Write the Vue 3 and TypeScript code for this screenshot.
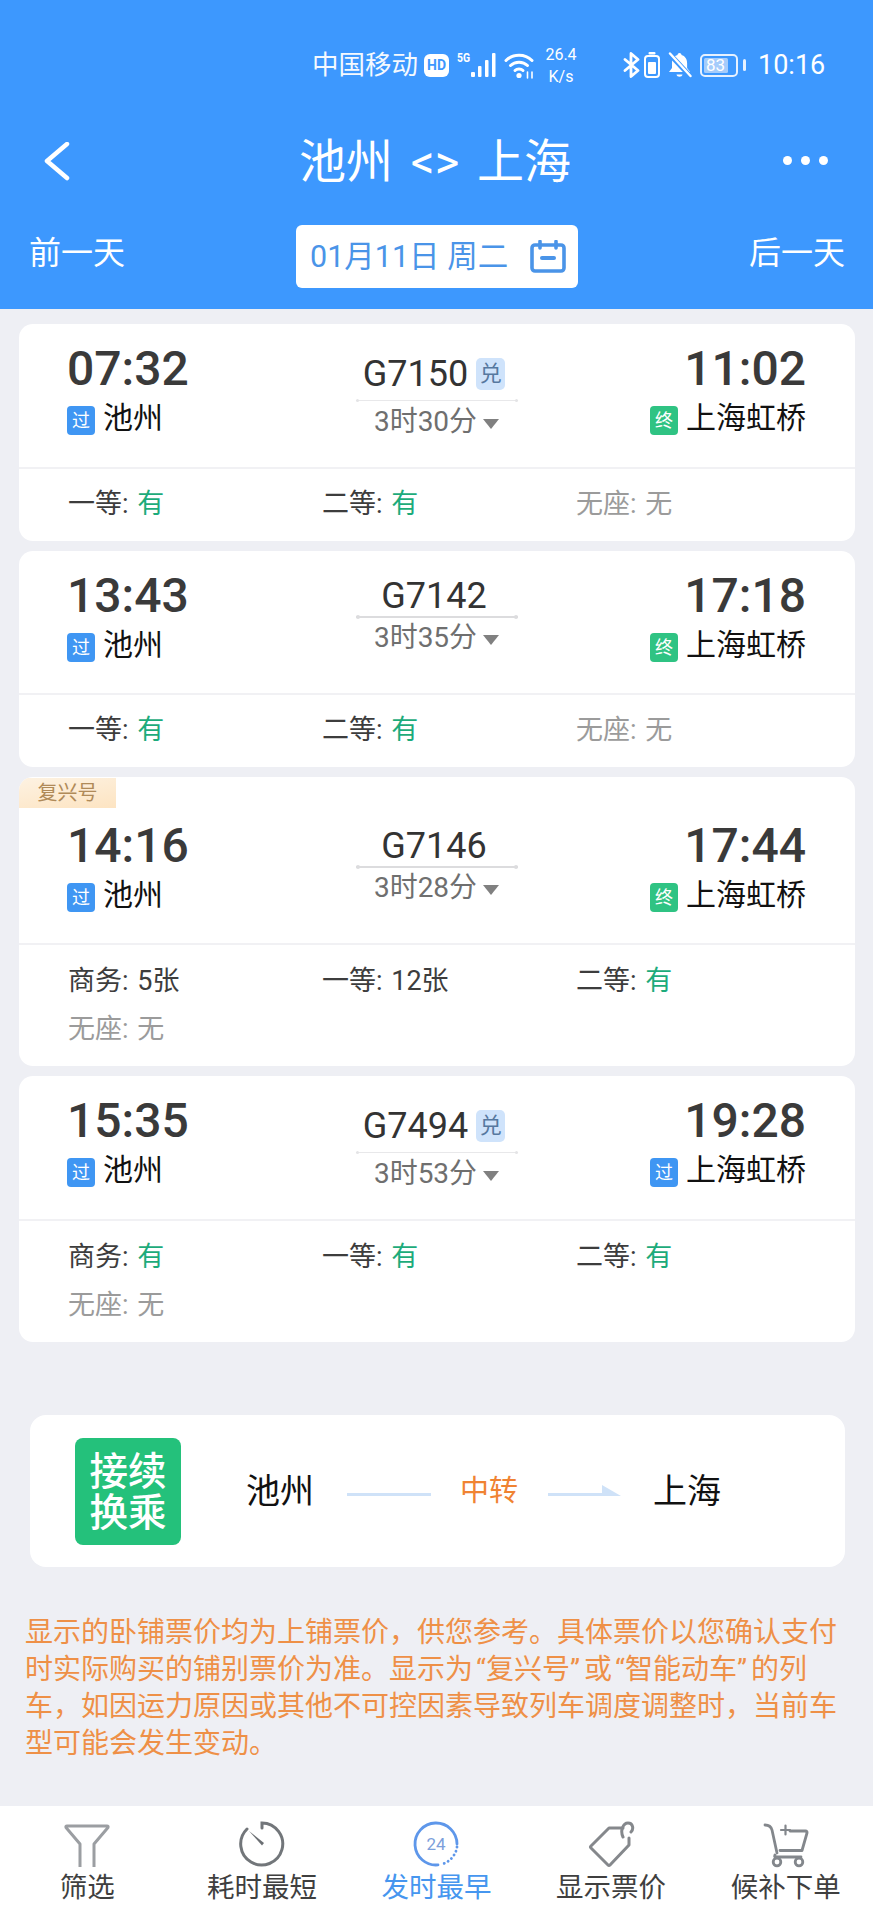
<script setup lang="ts">
interface Seat { label: string; value: string; state: 'yes' | 'count' | 'none' }
interface Train {
  dep: string; arr: string; no: string; dur: string; bonus?: boolean; tag?: string;
  endMark: string; endKind: 'end' | 'pass'; seats: Seat[];
}
const S = (label: string, value: string, state: Seat['state']): Seat => ({ label, value, state })
const trains: Train[] = [
  { dep: '07:32', arr: '11:02', no: 'G7150', dur: '3时30分', bonus: true, endMark: '终', endKind: 'end',
    seats: [S('一等', '有', 'yes'), S('二等', '有', 'yes'), S('无座', '无', 'none')] },
  { dep: '13:43', arr: '17:18', no: 'G7142', dur: '3时35分', endMark: '终', endKind: 'end',
    seats: [S('一等', '有', 'yes'), S('二等', '有', 'yes'), S('无座', '无', 'none')] },
  { dep: '14:16', arr: '17:44', no: 'G7146', dur: '3时28分', tag: '复兴号', endMark: '终', endKind: 'end',
    seats: [S('商务', '5张', 'count'), S('一等', '12张', 'count'), S('二等', '有', 'yes'), S('无座', '无', 'none')] },
  { dep: '15:35', arr: '19:28', no: 'G7494', dur: '3时53分', bonus: true, endMark: '过', endKind: 'pass',
    seats: [S('商务', '有', 'yes'), S('一等', '有', 'yes'), S('二等', '有', 'yes'), S('无座', '无', 'none')] },
]
</script>

<template>
  <div class="page">
    <header class="head">
      <div class="status">
        <span class="carrier">中国移动</span>
        <span class="hd">HD</span>
        <span class="fiveg">5G</span>
        <svg class="signal" width="26" height="26" viewBox="0 0 26 26">
          <rect x="0" y="20" width="4" height="5" rx="1" fill="#fff" />
          <rect x="7" y="14" width="3.5" height="11" rx="1" fill="#fff" />
          <rect x="14" y="8" width="3.5" height="17" rx="1" fill="#fff" />
          <rect x="21" y="1" width="3.5" height="24" rx="1" fill="#fff" />
        </svg>
        <svg class="wifi" width="31" height="27" viewBox="0 0 31 27" fill="none" stroke="#fff" stroke-width="3" stroke-linecap="round">
          <path d="M2 8.5C9 1.5 21 1.5 28 8.5" />
          <path d="M6.5 13.5C11 9 19 9 23.5 13.5" />
          <path d="M11 18.5C13 16.5 17 16.5 19 18.5" />
          <circle cx="15" cy="23.5" r="2.6" fill="#fff" stroke="none" />
          <path d="M23.5 20v6M28 20v6" stroke-width="1.6" />
        </svg>
        <span class="speed"><span>26.4</span><span>K/s</span></span>
        <svg class="bt" width="17" height="26" viewBox="0 0 17 26" fill="none" stroke="#fff" stroke-width="2.800" stroke-linejoin="round" stroke-linecap="round">
          <path d="M2 7.500 15 18.500 8 24.500V1.500L15 7.500 2 18.500" />
        </svg>
        <svg class="minibat" width="16" height="26" viewBox="0 0 16 26">
          <rect x="4.5" y="0" width="7" height="2.6" rx="1" fill="#fff" />
          <rect x="1" y="4" width="14" height="21" rx="3" fill="none" stroke="#fff" stroke-width="2" />
          <rect x="4" y="10" width="8" height="12" rx="1" fill="#fff" />
        </svg>
        <svg class="bell" width="25" height="26" viewBox="0 0 25 26">
          <path d="M12.5 1c1.4 0 2 1 2 2 3.6 1 5.600 4 5.600 8v5l3 4H2l3-4v-5c0-4 2-7 5.500-8 0-1 .6-2 2-2z" fill="#fff" />
          <path d="M9.500 22.500h6c-.5 3-5.500 3-6 0z" fill="#fff" />
          <path d="M2.500 2 23 24" stroke="#3d98fe" stroke-width="5" />
          <path d="M3 1.500 23.500 24" stroke="#fff" stroke-width="2.400" stroke-linecap="round" />
        </svg>
        <span class="battery"><span class="cell"><b>83</b></span></span>
        <span class="tip"></span>
        <span class="clock">10:16</span>
      </div>
      <div class="nav">
        <svg class="back" width="30" height="40" viewBox="0 0 30 40" fill="none" stroke="#fff" stroke-width="4.500" stroke-linecap="round" stroke-linejoin="round">
          <path d="M25 2 5 19l20 17" />
        </svg>
        <h1 class="title">池州 &lt;&gt; 上海</h1>
        <div class="more"><i></i><i></i><i></i></div>
      </div>
      <div class="dates">
        <span class="prev">前一天</span>
        <div class="datebox">
          <span>01月11日 周二</span>
          <svg width="36" height="33" viewBox="0 0 36 33" fill="none" stroke="#4a94e8" stroke-width="3.600" stroke-linecap="round">
            <rect x="2" y="5" width="32" height="26" rx="3" />
            <path d="M10 1.500V8M26 1.500V8" />
            <path d="M12 18h12" stroke-width="4" />
          </svg>
        </div>
        <span class="next">后一天</span>
      </div>
    </header>

    <main class="list">
      <article v-for="t in trains" :key="t.no" class="card">
        <span v-if="t.tag" class="tag">{{ t.tag }}</span>
        <div class="top" :class="{ tagged: t.tag }">
          <div class="side">
            <div class="time">{{ t.dep }}</div>
            <div class="station">
              <span class="mark pass">过</span><span class="name">池州</span>
            </div>
          </div>
          <div class="mid" :class="{ bonus: t.bonus }">
            <div class="train">
              <span>{{ t.no }}</span>
              <span v-if="t.bonus" class="dui">兑</span>
            </div>
            <div class="rail"></div>
            <div class="dur"><span>{{ t.dur }}</span><i class="tri"></i></div>
          </div>
          <div class="side right">
            <div class="time">{{ t.arr }}</div>
            <div class="station">
              <span class="mark" :class="t.endKind">{{ t.endMark }}</span><span class="name">上海虹桥</span>
            </div>
          </div>
        </div>
        <div class="seats" :class="{ two: t.seats.length > 3 }">
          <div v-for="s in t.seats" :key="s.label" class="seat" :class="{ off: s.state === 'none' }">
            {{ s.label }}: <span class="val" :class="{ yes: s.state === 'yes' }">{{ s.value }}</span>
          </div>
        </div>
      </article>

      <section class="transfer">
        <div class="jx"><div class="jxl">接续</div><div class="jxl">换乘</div></div>
        <span class="city from">池州</span>
        <span class="tline one"></span>
        <span class="zz">中转</span>
        <svg class="arrow" width="73" height="14" viewBox="0 0 73 14">
          <rect x="0" y="9" width="60" height="3" fill="#cfe2f8" />
          <polygon points="54,1 73,12 54,12" fill="#cfe2f8" />
        </svg>
        <span class="city to">上海</span>
      </section>

      <p class="note">
        显示的卧铺票价均为上铺票价，供您参考。具体票价以您确认支付<br />
        时实际购买的铺别票价为准。显示为<span class="qo">“</span>复兴号<span class="qc">”</span>或<span class="qo">“</span>智能动车<span class="qc">”</span>的列<br />
        车，如因运力原因或其他不可控因素导致列车调度调整时，当前车<br />
        型可能会发生变动。
      </p>
    </main>

    <nav class="tabs">
      <div class="tab">
        <svg width="48" height="48" viewBox="0 0 48 48" fill="none" stroke="#9b9ea2" stroke-width="3" stroke-linejoin="round">
          <path d="M17 47V24L3 7.500Q2.500 6 4 6H44Q45.500 6 45 7.500L31 24V47" />
        </svg>
        <span>筛选</span>
      </div>
      <div class="tab">
        <svg width="48" height="48" viewBox="0 0 48 48" fill="none" stroke="#72767a" stroke-width="3" stroke-linecap="round">
          <path d="M24 8V3A21 21 0 1 1 9 9" />
          <polygon points="11,11 26,23 24,25.500" fill="#6b6f73" stroke="none" />
        </svg>
        <span>耗时最短</span>
      </div>
      <div class="tab active">
        <svg width="48" height="48" viewBox="0 0 48 48" fill="none" stroke="#5e97ea" stroke-width="2.800" stroke-linecap="round">
          <path d="M26 44.900A21 21 0 1 1 45 24" />
          <path d="M45 27A21 21 0 0 1 29 44.400" stroke-dasharray="0.100 4.200" />
          <text x="24" y="30" text-anchor="middle" class="tx24">24</text>
        </svg>
        <span>发时最早</span>
      </div>
      <div class="tab">
        <svg width="48" height="48" viewBox="0 0 48 48" fill="none" stroke="#85888c" stroke-width="3" stroke-linejoin="round" stroke-linecap="round">
          <path d="M36 8H22L4 26Q3 27 4 28L21 45Q22 46 23 45L42 25V18" />
          <path d="M36 17C33 11 36 3 41 3C46 3 47 9 44 12" />
        </svg>
        <span>显示票价</span>
      </div>
      <div class="tab">
        <svg width="48" height="48" viewBox="0 0 48 48" fill="none" stroke="#83878c" stroke-width="2.800" stroke-linecap="round" stroke-linejoin="round">
          <path d="M3 5C7 5 9 6 10 10L15 33" />
          <path d="M28 11H43.500Q45.500 11 45 13L40 30.500H18" />
          <path d="M19 10H28M23.500 5.500V14.500" stroke-width="2.200" />
          <path d="M13 35C12 37 13 37 14 37H39" />
          <circle cx="15" cy="42" r="3.800" />
          <circle cx="37" cy="42" r="3.800" />
        </svg>
        <span>候补下单</span>
      </div>
    </nav>
  </div>
</template>

<style>
html, body { margin: 0; padding: 0; background: #eeeff4; }
</style>

<style scoped>
.page {
  width: 873px;
  height: 1920px;
  display: flex;
  flex-direction: column;
  overflow: hidden;
  background: #eeeff4;
  font-family: Roboto, "Noto Sans CJK SC", sans-serif;
  color: #333;
}

.head { height: 309px; flex: none; background: #3d98fe; color: #fff; }

.status {
  height: 130px;
  box-sizing: border-box;
  display: flex;
  align-items: center;
  justify-content: flex-end;
  padding-right: 49px;
}
.carrier { font-size: 26.5px; line-height: 26px; opacity: .95; margin-right: 2px; }
.hd {
  width: 25px; height: 23px; margin-left: 4px; border-radius: 6px; background: #fff; color: #3d98fe;
  font-size: 14px; font-weight: 700; line-height: 23px; text-align: center;
}
.fiveg { width: 14px; margin-left: 8px; font-size: 13px; font-weight: 700; line-height: 12px; transform: translateY(-7px) scaleX(.8); transform-origin: left center; }
.wifi { margin-left: 7px; }
.speed {
  width: 40px; margin-left: 6px; display: flex; flex-direction: column; align-items: center;
  font-size: 16px; line-height: 22px; transform: translateY(1px);
}
.bt { margin-left: 42px; }
.minibat { margin-left: 4px; }
.bell { margin-left: 7px; }
.battery {
  width: 38px; height: 23px; margin-left: 8px; box-sizing: border-box; border: 2.5px solid #e6f1ff; border-radius: 5px;
  padding: 2px; display: flex;
}
.cell { width: 24px; background: #a5ccfb; border-radius: 1.5px; font-size: 17px; line-height: 15px; text-align: left; }
.cell b { font-weight: 400; color: #fff; margin-left: 2px; }
.tip { width: 3px; height: 12px; margin-left: 5px; background: #e6f1ff; border-radius: 2px; }
.clock { width: 66px; margin-left: 12px; font-size: 27px; line-height: 30px; white-space: nowrap; }

.nav {
  height: 64px;
  display: grid;
  grid-template-columns: 1fr auto 1fr;
  align-items: center;
  padding: 0 45px 0 42px;
}
.back { display: block; }
.title { margin: 0; font-size: 47px; font-weight: 400; line-height: 64px; word-spacing: 6px; }
.more { display: flex; gap: 9px; justify-content: flex-end; margin-bottom: 4px; }
.more i { width: 9px; height: 9px; border-radius: 50%; background: #fff; }

.dates {
  margin-top: 31px;
  display: grid;
  grid-template-columns: 1fr 282px 1fr;
  align-items: start;
  padding: 0 28px 0 29px;
  font-size: 32px;
  line-height: 56px;
}
.next { text-align: right; }
.datebox {
  height: 63px;
  border-radius: 6px;
  background: #fff;
  color: #4a94e8;
  font-size: 30.5px;
  display: flex;
  align-items: center;
  padding-left: 14px;
  gap: 22px;
  white-space: nowrap;
}

.list { flex: 1; padding-top: 15px; min-height: 0; }

.card {
  position: relative;
  margin: 0 18px 10px 19px;
  background: #fff;
  border-radius: 14px;
  overflow: hidden;
}
.tag {
  position: absolute;
  left: 0;
  top: 1px;
  width: 97px;
  height: 30px;
  background: linear-gradient(170deg, #fdf2e2, #fde4c2);
  color: #b08a58;
  font-size: 20px;
  line-height: 30px;
  text-align: center;
}

.top {
  display: grid;
  grid-template-columns: 1fr 162px 1fr;
  padding: 0 49px 0 48px;
}
.top.tagged { padding-top: 24px; }
.side { padding: 21px 0 30px; }
.time { height: 48px; font-size: 48px; font-weight: 500; line-height: 48px; color: #3a3a3a; }
.station { margin-top: 7px; display: flex; align-items: flex-start; }
.mark {
  flex: none;
  width: 28px; height: 29px; margin-top: 6px; margin-right: 8px; border-radius: 4px;
  color: #fff; font-size: 18px; line-height: 29px; text-align: center;
}
.pass { background: #3f96f3; }
.end { background: #2fc383; }
.name { font-size: 30px; line-height: 36px; color: #111; white-space: nowrap; }
.right { text-align: right; }
.right .station { justify-content: flex-end; }

.mid { padding-top: 25px; display: flex; flex-direction: column; align-items: center; }
.mid.bonus { padding: 30px 0 31px; }
.train {
  height: 40px;
  display: flex;
  align-items: center;
  gap: 8px;
  padding-right: 5px;
  font-size: 36px;
  line-height: 40px;
  color: #333;
}
.dui {
  width: 29px; height: 32px; border-radius: 5px; background: #cfe3fb; color: #56789f;
  font-size: 22px; line-height: 32px; text-align: center;
}
.rail {
  position: relative;
  width: 162px;
  height: 2px;
  margin-bottom: 6px;
  background: #dcdcde;
}
.rail::before, .rail::after {
  content: "";
  position: absolute;
  top: -1px;
  width: 4px;
  height: 4px;
  border-radius: 50%;
  background: #dcdcde;
}
.rail::before { left: 0; }
.rail::after { right: 0; }
.mid.bonus .rail { margin-top: 6px; height: 1px; background: #e8e8ea; margin-bottom: 7px; }
.mid.bonus .rail::before, .mid.bonus .rail::after { width: 3px; height: 3px; background: #e4e4e6; }
.dur {
  height: 28px;
  display: flex;
  align-items: center;
  gap: 6px;
  font-size: 28px;
  line-height: 28px;
  color: #6f6f6f;
  white-space: nowrap;
}
.tri {
  width: 0; height: 0; margin-top: 3px;
  border-left: 8px solid transparent;
  border-right: 8px solid transparent;
  border-top: 10px solid #808080;
}

.seats {
  border-top: 2px solid #f1f1f4;
  display: grid;
  grid-template-columns: repeat(3, 254px);
  padding: 11px 0 13px 49px;
}
.seats.two { padding: 12px 0 13px 49px; }
.seat { font-size: 27px; line-height: 48px; color: #3d3d3d; white-space: nowrap; }
.seat.off { color: #9b9b9b; }
.val { margin-left: 2px; }
.yes { color: #1dab7b; }

.transfer {
  height: 152px;
  margin: 73px 28px 0 30px;
  background: #fff;
  border-radius: 16px;
  display: flex;
  align-items: center;
}
.jx {
  width: 106px; height: 107px; margin-left: 45px; border-radius: 8px; background: #24c17b; color: #fff;
  font-size: 38.5px; font-weight: 500; text-align: center;
  box-sizing: border-box; padding-top: 13px;
}
.jxl { height: 41px; line-height: 41px; }
.city { font-size: 34px; line-height: 40px; color: #111; }
.from { margin-left: 65px; }
.tline { width: 84px; height: 3px; background: #cfe2f8; }
.one { margin: 6px 0 0 33px; }
.zz { margin-left: 29px; font-size: 29px; line-height: 40px; color: #f08332; }
.arrow { margin-left: 30px; }
.to { margin-left: 32px; }

.note {
  margin: 47px 0 0;
  padding-left: 25px;
  font-size: 28px;
  line-height: 37px;
  color: #ee9047;
  white-space: nowrap;
}
.qo { padding-left: 3px; }
.qc { padding-right: 4px; }

.tabs {
  height: 114px;
  flex: none;
  background: #fff;
  display: grid;
  grid-template-columns: repeat(5, 1fr);
  box-sizing: border-box;
  padding-top: 14px;
}
.tab {
  display: flex;
  flex-direction: column;
  align-items: center;
  font-size: 27.5px;
  line-height: 32px;
  color: #3f3f3f;
}
.tab svg { display: block; margin-bottom: 4px; }
.tab.active { color: #4696ef; }
.tx24 { font-family: Roboto, sans-serif; font-size: 17px; fill: #7d9fdb; stroke: none; }
</style>
